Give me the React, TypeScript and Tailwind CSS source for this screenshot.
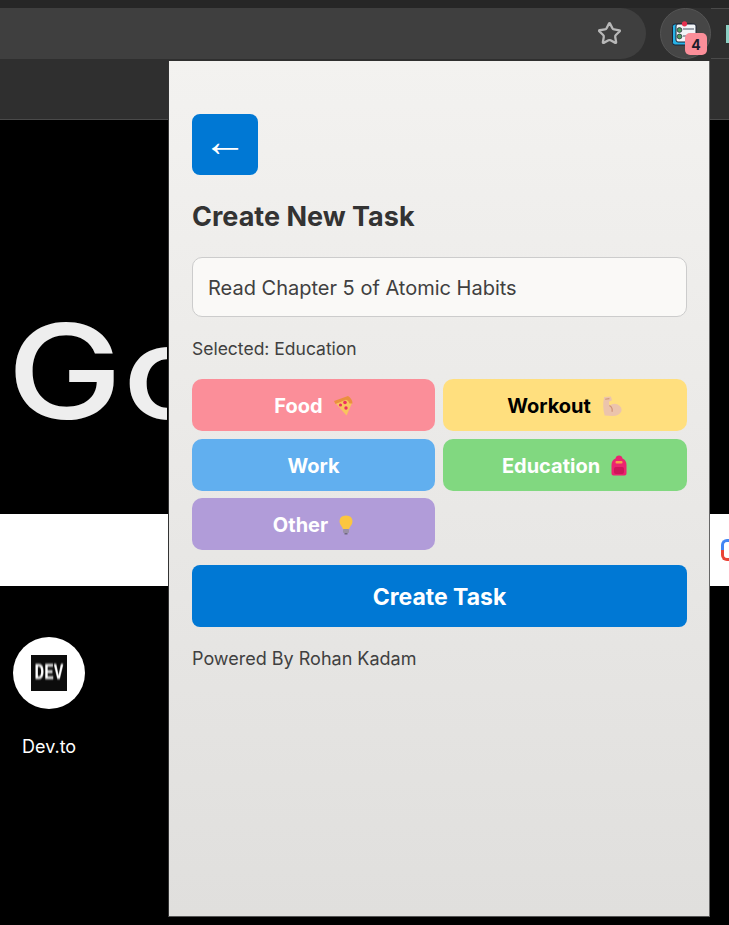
import { FC, ReactNode } from 'react';
import { Star } from 'lucide-react';

const PizzaIcon = () => (
  <svg width="20" height="20" viewBox="0 0 20 20" className="shrink-0">
    <path d="M1.5 6 L15 0.5 Q19 3.5 19 7 L13.5 19.5 Z" fill="#f9c45e" />
    <path d="M1 5 L15 0 Q19.5 3 19.5 7.5 L16.5 7.5 Q15.5 4.5 13 3.8 L2.5 8 Z" fill="#ea8f3f" />
    <circle cx="12" cy="6.5" r="1.8" fill="#ee2f62" />
    <circle cx="7.5" cy="9" r="1.6" fill="#ee2f62" />
    <circle cx="13" cy="12" r="1.7" fill="#ee2f62" />
  </svg>
);

const MuscleIcon = () => (
  <svg width="22" height="21" viewBox="0 0 21 20" className="shrink-0">
    <path d="M3 1 L9.5 0.5 L10.5 4 L7.5 5.5 L8 9 Q12 6.5 16 8 Q20.5 10.5 19.5 14.5 Q17.5 19 11 19 L3.5 18.5 Q1 10 3 1 Z" fill="#ecc4ac" />
    <path d="M8 9 Q11.5 11 10.5 15" stroke="#cf9478" strokeWidth="1.2" fill="none" />
    <path d="M4 3 L8 2.5" stroke="#cf9478" strokeWidth="1" fill="none" />
  </svg>
);

const BackpackIcon = () => (
  <svg width="18" height="21" viewBox="0 0 18 21" className="shrink-0">
    <path d="M9 0.5 Q12 0.5 12.5 3.5 Q16.5 5 16.5 10 L16.5 18.5 Q16.5 20.5 14.5 20.5 L3.5 20.5 Q1.5 20.5 1.5 18.5 L1.5 10 Q1.5 5 5.5 3.5 Q6 0.5 9 0.5 Z" fill="#ec2370" />
    <rect x="5.5" y="6" width="7" height="2.5" rx="1" fill="#f5a34a" />
    <rect x="4" y="12" width="10" height="7" rx="2" fill="#cf1559" />
  </svg>
);

const BulbIcon = () => (
  <svg width="16" height="20" viewBox="0 0 16 20" className="shrink-0">
    <path d="M8 0.5 Q14.5 0.5 14.5 6.5 Q14.5 9.5 12 12 L11 14 L5 14 L4 12 Q1.5 9.5 1.5 6.5 Q1.5 0.5 8 0.5 Z" fill="#fbc640" />
    <rect x="5" y="14" width="6" height="4" rx="1" fill="#9a90a8" />
    <rect x="6.5" y="18" width="3" height="1.5" fill="#6f6880" />
  </svg>
);

const ClipboardIcon = () => (
  <svg width="25" height="26" viewBox="0 0 25 26">
    <rect x="0.5" y="3" width="21" height="21" rx="2.5" fill="#27b2e6" stroke="#1b2233" strokeWidth="1" />
    <rect x="4" y="3" width="20" height="18" rx="2" fill="#f1f3f6" stroke="#1b2233" strokeWidth="1" />
    <circle cx="7.5" cy="9" r="2.4" fill="#4f9a5c" stroke="#1b2233" strokeWidth="0.7" />
    <circle cx="7.5" cy="15.5" r="2.4" fill="#4f9a5c" stroke="#1b2233" strokeWidth="0.7" />
    <path d="M11 8 H22 M11 15 H18" stroke="#4a5263" strokeWidth="1.2" />
    <circle cx="12.5" cy="2.8" r="2.6" fill="#e5304f" />
  </svg>
);

const TagButton: FC<{ className: string; children: ReactNode }> = ({ className, children }) => (
  <button className={`h-[52px] pt-0.5 rounded-[10px] flex items-center justify-center gap-2.5 text-[20px] font-bold ${className}`}>
    {children}
  </button>
);

const Popup = () => (
  <div className="absolute left-[168px] top-[61px] w-[542px] h-[856px] border-l border-l-[#333333] border-r border-r-[#666666] border-b border-b-[#555555] bg-gradient-to-b from-[#f3f2f0] to-[#e0dfdd] pl-[23px] pr-[22px] pt-[53px] text-[#404040]">
    <button className="w-[66px] h-[61px] pb-2 rounded-[8px] bg-[#0078d4] text-white flex items-center justify-center">
      <span className="text-[44px] leading-none font-['Liberation_Sans']">←</span>
    </button>
    <h1 className="mt-[22px] text-[27px] leading-[40px] font-bold text-[#333333]">Create New Task</h1>
    <div className="mt-5 h-[60px] pt-0.5 rounded-[10px] border border-[#cccccc] bg-[#faf9f7] px-[15px] flex items-center text-[20px]">
      Read Chapter 5 of Atomic Habits
    </div>
    <p className="mt-[20px] text-[17.5px] leading-[24px]">Selected: Education</p>
    <div className="mt-[18px] grid grid-cols-[243px_244px] gap-x-2 gap-y-[7.5px]">
      <TagButton className="bg-[#fb8e99] text-white">Food <PizzaIcon /></TagButton>
      <TagButton className="bg-[#ffdf7e] text-black">Workout <MuscleIcon /></TagButton>
      <TagButton className="bg-[#61afef] text-white">Work</TagButton>
      <TagButton className="bg-[#81d880] text-white">Education <BackpackIcon /></TagButton>
      <TagButton className="bg-[#b19cd9] text-white">Other <BulbIcon /></TagButton>
    </div>
    <button className="mt-[15px] w-full h-[62px] pt-0.5 rounded-[8px] bg-[#0078d4] text-white text-[23px] font-bold">
      Create Task
    </button>
    <p className="mt-[20px] text-[18px] leading-[24px]">Powered By Rohan Kadam</p>
  </div>
);

export default function App() {
  return (
    <div className="relative w-[729px] h-[925px] bg-black overflow-hidden font-['Inter',sans-serif]">
      <div className="h-2 bg-[#262626]" />
      <div className="h-[52px] bg-[#2f2f2f] flex">
        <div className="w-[646px] h-[51px] rounded-r-full bg-[#3f3f3f] flex items-center justify-end pr-[24px]">
          <Star size={25} strokeWidth={2.2} className="text-[#b8b8b8]" />
        </div>
        <div className="ml-3.5 relative w-[51px] h-[51px] rounded-full bg-[#464646] border border-[#555555] flex items-center pl-[11px]">
          <ClipboardIcon />
          <span className="absolute left-[24px] top-[24px] w-[22px] h-[22px] rounded-[5px] bg-[#fb8e99] text-[#1d1d2b] text-[14px] font-bold flex items-center justify-center">
            4
          </span>
        </div>
        <div className="flex-1 h-[51px] border-y border-[#4a4a4a] flex items-center justify-end">
          <div className="w-[3px] h-[18px] bg-[#8ccfc4]" />
        </div>
      </div>
      <div className="h-[60px] bg-[#2f2f2f] border-b border-[#4a4a4a]" />
      <div className="w-[167px] h-[394px] pt-[187px] pl-[7px] overflow-hidden">
        <div className="text-[131px] leading-[130px] font-medium scale-x-[1.18] origin-left text-[#eeeeee] whitespace-nowrap">Go</div>
      </div>
      <div className="h-[72px] bg-white flex items-center justify-end">
        <div className="w-2 h-[22px] flex flex-col">
          <div className="h-[11px] rounded-tl-[6px] border-t-[3px] border-l-[3px] border-[#4285f4]" />
          <div className="h-[11px] rounded-bl-[6px] border-b-[3px] border-l-[3px] border-[#ea4335]" />
        </div>
      </div>
      <div className="w-[72px] h-[72px] ml-[13px] mt-[51px] rounded-full bg-white flex items-center justify-center">
        <div className="w-9 h-9 bg-[#0c0c0c] flex items-center justify-center">
          <span className="text-white text-[16px] font-bold font-['Liberation_Mono'] scale-y-[1.4] blur-[0.6px]">DEV</span>
        </div>
      </div>
      <div className="mt-[26px] ml-[22px] text-[18px] leading-[24px] text-white">Dev.to</div>
      <Popup />
    </div>
  );
}
